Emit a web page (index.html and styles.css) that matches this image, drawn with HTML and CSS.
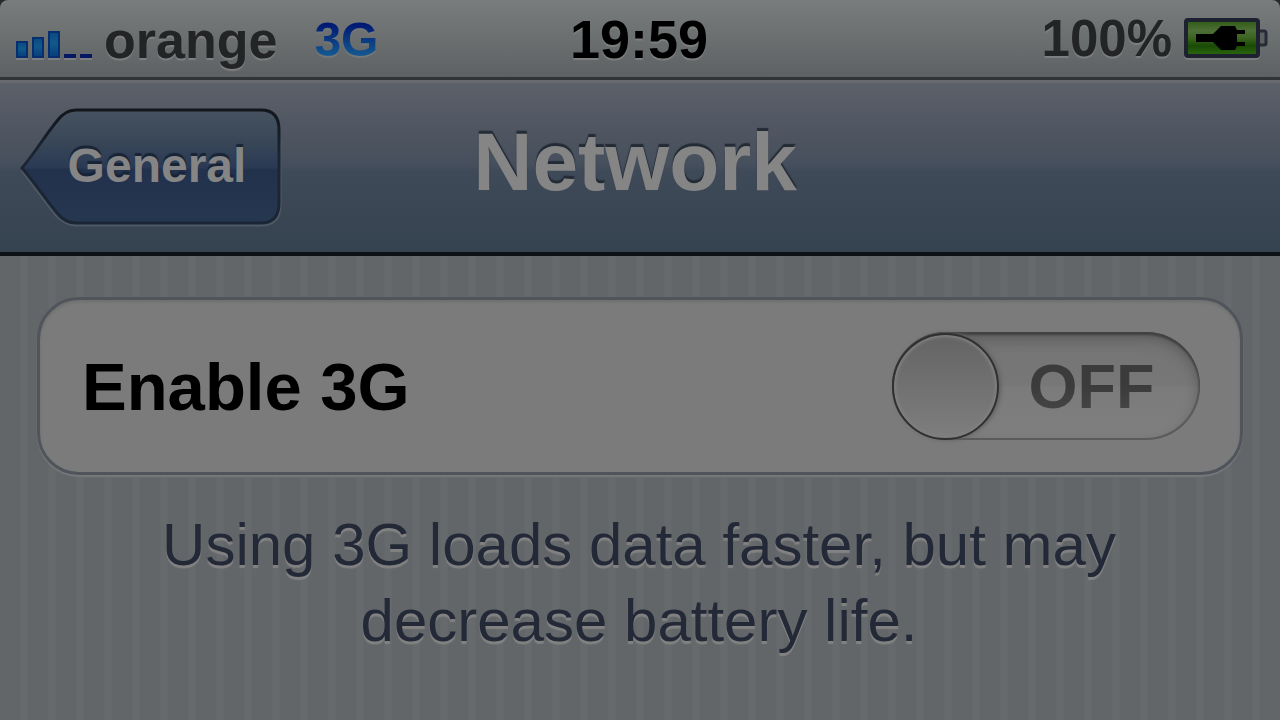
FILE: index.html
```html
<!DOCTYPE html>
<html lang="en">
<head>
<meta charset="utf-8">
<title>Network</title>
<link rel="stylesheet" href="styles.css">
</head>
<body>
<div class="status-bar">
  <div class="status-left">
    <svg class="signal" viewBox="0 0 76 30" role="img" aria-label="Signal strength">
      <defs>
        <linearGradient id="bar" x1="0" y1="0" x2="0" y2="1">
          <stop offset="0" stop-color="#0b4880"/><stop offset=".45" stop-color="#12598a"/><stop offset="1" stop-color="#083c7c"/>
        </linearGradient>
      </defs>
      <path d="M0 27h12v2H0zM16 27h12v2H16zM32 27h12v2H32zM48 27h12v2H48zM64 27h12v2H64z" fill="#7c7e80"/>
      <g fill="url(#bar)" stroke="#062f70" stroke-width="2">
        <rect x="1" y="11" width="10" height="15"/>
        <rect x="17" y="7" width="10" height="19"/>
        <rect x="33" y="1" width="10" height="25"/>
      </g>
      <path d="M48 23h12v4H48zM64 23h12v4H64z" fill="#061660"/>
    </svg>
    <span class="carrier">orange</span>
    <span class="network-type">3G</span>
  </div>
  <time class="clock">19:59</time>
  <div class="status-right">
    <span class="percent">100%</span>
    <svg class="battery" viewBox="0 0 84 42" role="img" aria-label="Battery charging">
      <defs>
        <linearGradient id="charge" x1="0" y1="0" x2="0" y2="1">
          <stop offset="0" stop-color="#2e5a14"/><stop offset=".3" stop-color="#4d6f36"/><stop offset=".5" stop-color="#3a6420"/><stop offset=".72" stop-color="#194a05"/><stop offset="1" stop-color="#2e6a10"/>
        </linearGradient>
      </defs>
      <rect x="1" y="3" width="74" height="38" rx="3" fill="none" stroke="#7a7c7e" stroke-width="2"/>
      <path d="M76 13h4q2 0 2 2v10q0 2-2 2h-4" fill="#5c6063" stroke="#272b38" stroke-width="3"/>
      <rect x="2" y="2" width="72" height="36" rx="2" fill="url(#charge)" stroke="#1e2230" stroke-width="4"/>
      <path d="M12 16h17l4-4 4-4h14l2 4h8v4h-8v8h8v4h-8l-2 4H37l-4-4-4-4H12z" fill="#000"/>
    </svg>
  </div>
</div>
<header class="nav-bar">
  <button class="back" type="button">
    <svg class="back-shape" viewBox="0 0 262 120" preserveAspectRatio="none" aria-hidden="true">
      <defs>
        <linearGradient id="face" x1="0" y1="0" x2="0" y2="1">
          <stop offset="0" stop-color="#465260"/><stop offset=".25" stop-color="#3b4858"/><stop offset=".51" stop-color="#2a3a54"/><stop offset=".53" stop-color="#22314c"/><stop offset="1" stop-color="#263750"/>
        </linearGradient>
        <linearGradient id="edge" x1="0" y1="0" x2="0" y2="1">
          <stop offset="0" stop-color="#12161c"/><stop offset=".4" stop-color="#1c2533"/><stop offset="1" stop-color="#1a2636"/>
        </linearGradient>
      </defs>
      <path d="M2 62 36 107Q46 117 55 117H241Q260 117 260 97V30" fill="none" stroke="#4f5965" stroke-width="3"/>
      <path d="M2 60C14 46 24 29 37 13Q45 2 56 2H241Q259 2 259 22V95Q259 115 241 115H56Q45 115 37 105C24 89 14 74 2 60Z" fill="url(#face)" stroke="url(#edge)" stroke-width="3"/>
    </svg>
    <span class="back-label">General</span>
  </button>
  <h1 class="title">Network</h1>
</header>
<main class="content">
  <div class="cell">
    <label class="cell-label" for="enable-3g">Enable 3G</label>
    <div class="switch">
      <input class="switch-knob" id="enable-3g" type="checkbox" role="switch">
      <span class="switch-text">OFF</span>
    </div>
  </div>
  <p class="note">Using 3G loads data faster, but may decrease battery life.</p>
</main>
</body>
</html>
```
FILE: styles.css
```css
* {
  box-sizing: border-box;
}

body {
  margin: 0;
  min-height: 100vh;
  display: flex;
  flex-direction: column;
  background: #25292c;
  font-family: "Liberation Sans", Arial, sans-serif;
}

.status-bar {
  display: grid;
  grid-template-columns: 1fr auto 1fr;
  align-items: center;
  height: 80px;
  padding: 0 12px 0 16px;
  border-bottom: 3px solid #303437;
  border-radius: 8px 8px 0 0;
  background: linear-gradient(#787c7c, #6b6f70 50%, #5d6163);
  font-weight: bold;
  line-height: 76px;
  text-shadow: 0 2px 1px #7e8082;
}

.status-left,
.status-right {
  display: flex;
  align-items: center;
}

.status-left {
  padding-top: 2px;
}

.status-right {
  justify-content: flex-end;
  gap: 12px;
}

.signal {
  width: 76px;
  height: 30px;
  margin: 12px 12px 0 0;
}

.carrier {
  color: #222425;
  font-size: 52px;
}

.network-type {
  margin-left: 37px;
  background: linear-gradient(#001a74 30%, #0d4284 55%, #176096 76%);
  background-clip: text;
  -webkit-background-clip: text;
  color: transparent;
  font-size: 48px;
  text-shadow: none;
  filter: drop-shadow(0 2px 0 #747779);
}

.clock {
  padding-right: 6px;
  color: #000;
  font-size: 54px;
}

.percent {
  color: #222425;
  font-size: 51px;
}

.battery {
  width: 84px;
  height: 42px;
}

.nav-bar {
  display: grid;
  grid-template-columns: 1fr auto 1fr;
  align-items: center;
  height: 176px;
  padding: 0 20px;
  border-top: 3px solid #696a70;
  border-bottom: 4px solid #0d1014;
  background: linear-gradient(#5c6069, #464f5c 48%, #3f4a59 52%, #35424f);
}

.back {
  position: relative;
  justify-self: start;
  width: 262px;
  height: 120px;
  padding: 0 0 4px 12px;
  border: 0;
  background: none;
  color: #858585;
  font: bold 48px "Liberation Sans", Arial, sans-serif;
  text-shadow: 0 -3px 1px #182336;
}

.back-shape {
  position: absolute;
  inset: 0;
  width: 100%;
  height: 100%;
}

.back-label {
  position: relative;
}

.title {
  margin: 0;
  padding: 0 10px 12px 0;
  color: #858585;
  font-size: 82px;
  line-height: 92px;
  text-shadow: 0 -3px 1px #232b35;
}

.content {
  flex: 1;
  padding: 41px 37px;
  background: repeating-linear-gradient(90deg, #636669 0 20px, #676a6c 21px 27px, #636669 28px);
}

.cell {
  display: flex;
  align-items: center;
  justify-content: space-between;
  min-height: 178px;
  padding: 0 40px 0 42px;
  border: 3px solid #50555c;
  border-radius: 42px;
  background: #7b7b7b;
  box-shadow: 0 2px 1px #76787a, inset 0 2px 3px #6e6f70;
}

.cell-label {
  color: #000;
  font-size: 67px;
  font-weight: bold;
}

.switch {
  display: flex;
  align-items: center;
  width: 308px;
  height: 108px;
  border-radius: 54px;
  background: linear-gradient(#747474, #777 49%, #7b7b7b 51%, #7f7f7f);
  box-shadow: inset 0 3px 2px #424242, inset 0 0 0 2px #5b5b5b, inset 0 6px 14px #595959;
}

.switch-knob {
  appearance: none;
  flex: none;
  width: 107px;
  height: 107px;
  margin: 0;
  border: 2px solid #303030;
  border-radius: 50%;
  background: linear-gradient(#646464, #7e7e7e);
  box-shadow: 2px 0 4px #606060, inset 0 0 3px 2px #808080;
}

.switch-text {
  flex: 1;
  padding-right: 16px;
  background: linear-gradient(#3b3b3b 50%, #4a4a4a);
  background-clip: text;
  -webkit-background-clip: text;
  color: transparent;
  font-size: 63px;
  font-weight: bold;
  text-align: center;
}

.note {
  margin: 32px 80px 0 78px;
  color: #242938;
  font-size: 60px;
  line-height: 76px;
  text-align: center;
  text-shadow: 0 3px 1px #828282;
}
```
